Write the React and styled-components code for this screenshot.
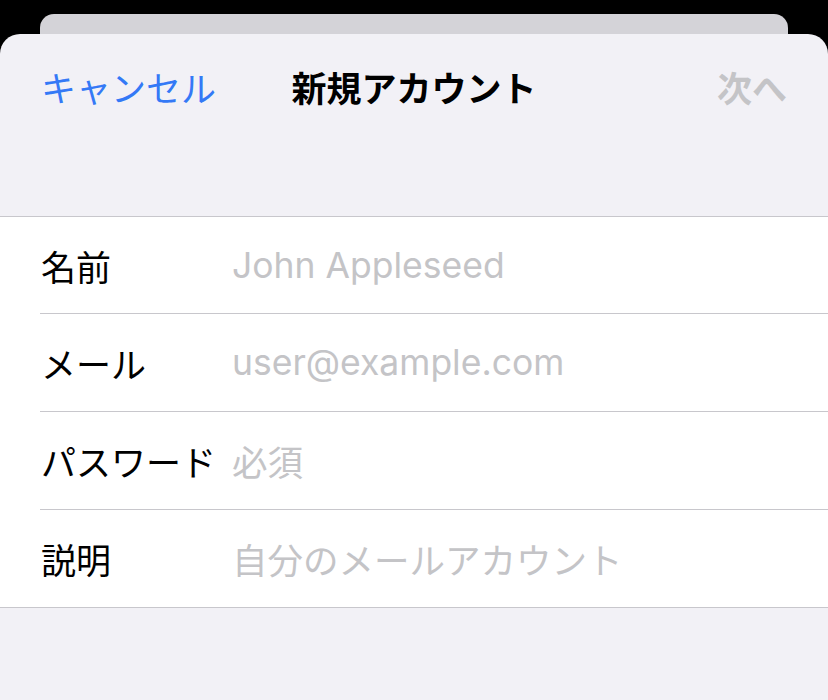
import React from 'react';
import styled, { createGlobalStyle } from 'styled-components';

const GlobalStyle = createGlobalStyle`
  html, body {
    margin: 0;
    padding: 0;
    background: #000;
  }
  body {
    font-family: 'Inter', 'Noto Sans CJK JP', sans-serif;
    -webkit-font-smoothing: antialiased;
  }
`;

const Screen = styled.div`
  width: 828px;
  height: 700px;
  background: #000;
  padding-top: 14px;
  box-sizing: border-box;
  display: flex;
  flex-direction: column;
  overflow: hidden;
`;

const BackCard = styled.div`
  height: 20px;
  margin: 0 40px;
  background: #d4d3d8;
  border-radius: 14px 14px 0 0;
`;

const Sheet = styled.div`
  flex: 1;
  background: #f2f1f6;
  border-radius: 20px 20px 0 0;
  display: flex;
  flex-direction: column;
`;

const NavBar = styled.div`
  height: 104px;
  padding: 0 41px;
  display: grid;
  grid-template-columns: 1fr auto 1fr;
  align-items: center;
  box-sizing: border-box;
`;

const NavButton = styled.span`
  font-size: 35px;
  font-weight: ${(p) => (p.$bold ? 600 : 400)};
  color: ${(p) => (p.$disabled ? '#c4c4c7' : '#3479f6')};
  justify-self: ${(p) => (p.$right ? 'end' : 'start')};
`;

const Title = styled.span`
  font-size: 35px;
  font-weight: 700;
  color: #000;
`;

const Group = styled.div`
  margin-top: 78px;
  background: #fff;
  border-top: 1px solid #c8c7cc;
  border-bottom: 1px solid #c8c7cc;
  padding-left: 40px;
`;

const Row = styled.div`
  height: ${(p) => (p.$first ? '96px' : '97px')};
  display: flex;
  align-items: center;
  border-top: ${(p) => (p.$first ? 'none' : '1px solid #c8c7cc')};
`;

const Label = styled.span`
  width: 191px;
  flex-shrink: 0;
  font-size: 35px;
  color: #000;
  padding-left: 1px;
  white-space: nowrap;
`;

const Placeholder = styled.span`
  font-size: 35.5px;
  color: #c4c4c7;
  white-space: nowrap;
`;

const fields = [
  { label: '名前', placeholder: 'John Appleseed' },
  { label: 'メール', placeholder: 'user@example.com' },
  { label: 'パスワード', placeholder: '必須' },
  { label: '説明', placeholder: '自分のメールアカウント' },
];

export default function App() {
  return (
    <>
      <GlobalStyle />
      <Screen>
        <BackCard />
        <Sheet>
          <NavBar>
            <NavButton>キャンセル</NavButton>
            <Title>新規アカウント</Title>
            <NavButton $right $bold $disabled>
              次へ
            </NavButton>
          </NavBar>
          <Group>
            {fields.map((f, i) => (
              <Row key={f.label} $first={i === 0}>
                <Label>{f.label}</Label>
                <Placeholder>{f.placeholder}</Placeholder>
              </Row>
            ))}
          </Group>
        </Sheet>
      </Screen>
    </>
  );
}
